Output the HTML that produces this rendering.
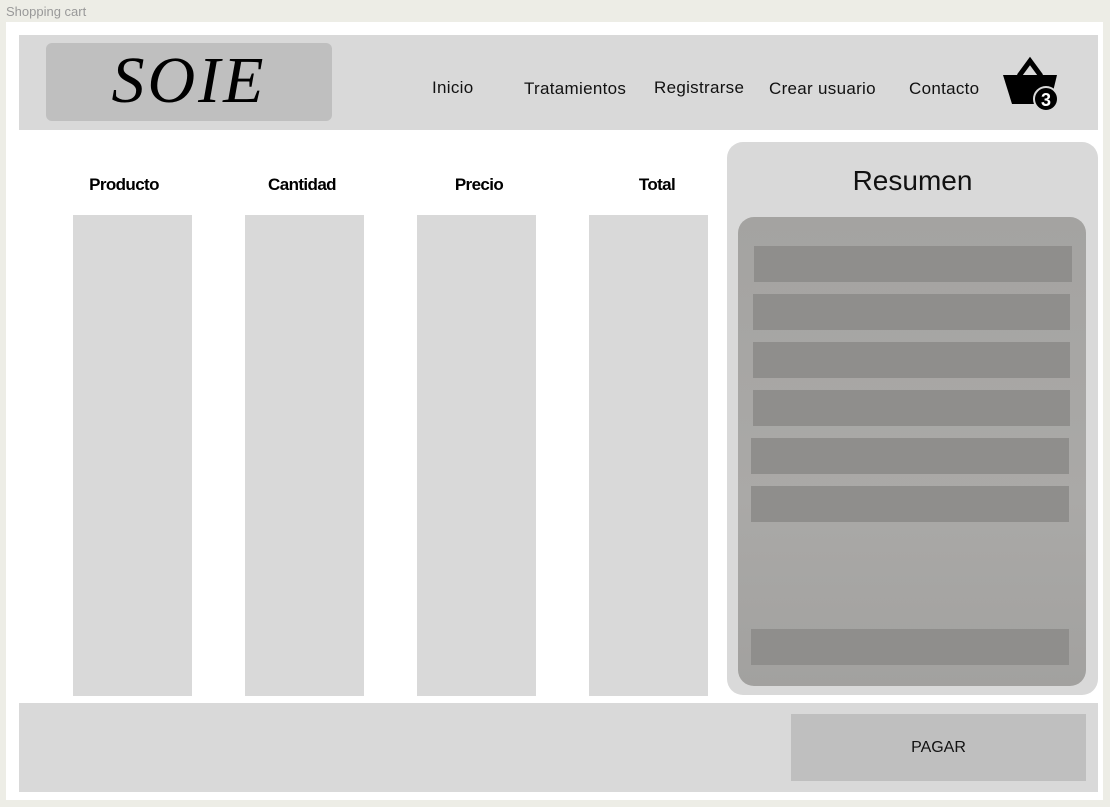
<!DOCTYPE html>
<html><head><style>
body{margin:0;width:1110px;height:807px;background:#edede6;position:relative;font-family:"Liberation Sans",sans-serif;overflow:hidden}
.a{position:absolute}
.t{position:absolute;font-size:13px;color:#999}
.nav{position:absolute;top:78px;font-size:17px;color:#111;letter-spacing:0.3px}
.h{position:absolute;top:175px;font-size:17px;font-weight:bold;color:#000;width:120px;text-align:center;letter-spacing:-0.6px}
.col{position:absolute;top:215px;width:119px;height:481px;background:#d9d9d9}
.bar{position:absolute;height:36px;background:#8f8e8c}
</style></head><body>
<div class="t" style="left:6px;top:4px">Shopping cart</div>
<div class="a" style="left:6px;top:22px;width:1097px;height:778px;background:#fff"></div>
<div class="a" style="left:19px;top:35px;width:1079px;height:95px;background:#d9d9d9"></div>
<div class="a" style="left:46px;top:43px;width:286px;height:78px;background:#bfbfbf;border-radius:6px"></div>
<div class="a" style="left:46px;top:44px;width:286px;text-align:center;font-family:'Liberation Serif',serif;font-style:italic;font-size:66px;line-height:74px;letter-spacing:3px">SOIE</div>
<div class="nav" style="left:432px">Inicio</div>
<div class="nav" style="left:524px;top:79px">Tratamientos</div>
<div class="nav" style="left:654px">Registrarse</div>
<div class="nav" style="left:769px;top:79px">Crear usuario</div>
<div class="nav" style="left:909px;top:79px">Contacto</div>
<svg class="a" style="left:1000px;top:56px" width="62" height="56" viewBox="0 0 62 56">
<path d="M19 20 L30 5 L41 20" fill="none" stroke="#000" stroke-width="5"/>
<path d="M3 19 H57 L50 48 H12 Z" fill="#000"/>
<circle cx="46" cy="43" r="12" fill="#000" stroke="#d9d9d9" stroke-width="2"/>
<text x="46" y="50" font-size="18" font-weight="bold" fill="#fff" text-anchor="middle" font-family="Liberation Sans">3</text>
</svg>
<div class="h" style="left:64px">Producto</div>
<div class="h" style="left:242px">Cantidad</div>
<div class="h" style="left:419px">Precio</div>
<div class="h" style="left:597px">Total</div>
<div class="col" style="left:73px"></div>
<div class="col" style="left:245px"></div>
<div class="col" style="left:417px"></div>
<div class="col" style="left:589px"></div>
<div class="a" style="left:727px;top:142px;width:371px;height:553px;background:#d9d9d9;border-radius:16px"></div>
<div class="a" style="left:727px;top:165px;width:371px;text-align:center;font-size:28px;color:#111">Resumen</div>
<div class="a" style="left:738px;top:217px;width:348px;height:469px;background:linear-gradient(#a4a3a1,#aaa9a7 60%,#a2a19f);border-radius:16px"></div>
<div class="bar" style="left:754px;top:246px;width:318px"></div>
<div class="bar" style="left:753px;top:294px;width:317px"></div>
<div class="bar" style="left:753px;top:342px;width:317px"></div>
<div class="bar" style="left:753px;top:390px;width:317px"></div>
<div class="bar" style="left:751px;top:438px;width:318px"></div>
<div class="bar" style="left:751px;top:486px;width:318px"></div>
<div class="bar" style="left:751px;top:629px;width:318px"></div>
<div class="a" style="left:19px;top:703px;width:1079px;height:89px;background:#d9d9d9"></div>
<div class="a" style="left:791px;top:714px;width:295px;height:67px;background:#bfbfbf;text-align:center;line-height:67px;font-size:16px;color:#111">PAGAR</div>
</body></html>
